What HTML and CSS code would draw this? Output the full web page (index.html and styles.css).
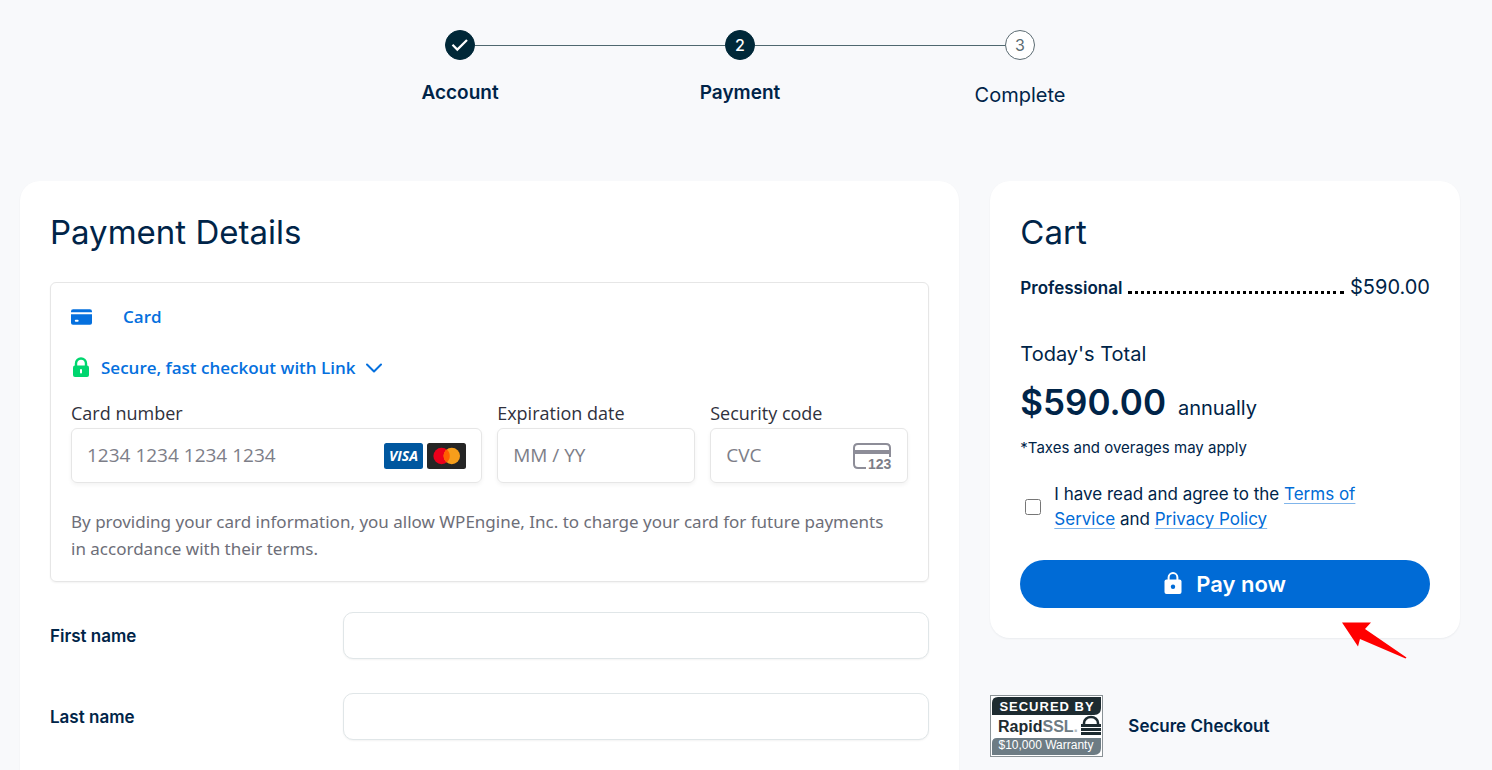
FILE: index.html
```
<!DOCTYPE html>
<html lang="en">
<head>
  <meta charset="UTF-8">
  <meta name="viewport" content="width=device-width, initial-scale=1.0">
  <title>Checkout - Payment</title>
  <link rel="stylesheet" href="styles.css">
</head>
<body>

  <ol class="steps">
    <li class="step done">
      <span class="step-circle">
        <svg width="18" height="14" viewBox="0 0 18 14"><path d="M1.5 6.8 6.3 11.6 16 2" fill="none" stroke="#fff" stroke-width="2.2"/></svg>
      </span>
      <span class="step-label">Account</span>
    </li>
    <li class="step active">
      <span class="step-circle">2</span>
      <span class="step-label">Payment</span>
    </li>
    <li class="step">
      <span class="step-circle">3</span>
      <span class="step-label">Complete</span>
    </li>
  </ol>

  <main class="checkout">

    <form class="panel payment">
      <h1>Payment Details</h1>

      <div class="card-box">
        <div class="card-method">
          <svg width="21" height="16" viewBox="0 0 22 16">
            <path d="M0 3V2.2Q0 0 2.2 0H19.8Q22 0 22 2.2V3Z" fill="#0570de"/>
            <path d="M0 5H22V14Q22 16 20 16H2Q0 16 0 14Z" fill="#0570de"/>
            <rect x="4" y="11" width="4" height="2" rx="1" fill="#fff"/>
          </svg>
          <span>Card</span>
        </div>

        <button type="button" class="link-toggle">
          <svg width="20" height="22" viewBox="0 0 20 22">
            <path d="M5 10V6.5a5 5 0 0 1 10 0V10" fill="none" stroke="#00d66f" stroke-width="2.4"/>
            <rect x="2" y="8.5" width="16" height="11.5" rx="2" fill="#00d66f"/>
            <rect x="9" y="12" width="2" height="4.6" rx="1" fill="#fff"/>
          </svg>
          <span>Secure, fast checkout with Link</span>
          <svg width="16" height="10" viewBox="0 0 16 10"><path d="M1 1.5 8 8.5 15 1.5" fill="none" stroke="#0570de" stroke-width="2" stroke-linecap="round" stroke-linejoin="round"/></svg>
        </button>

        <div class="card-fields">
          <div class="card-number">
            <label for="cardNumber">Card number</label>
            <div class="field">
              <input type="text" id="cardNumber" placeholder="1234 1234 1234 1234">
              <svg width="39" height="26" viewBox="0 0 39 26">
                <rect width="39" height="26" rx="2.5" fill="#00579f"/>
                <text x="19.5" y="18" text-anchor="middle" class="visa">VISA</text>
              </svg>
              <svg width="39" height="26" viewBox="0 0 39 26">
                <rect width="39" height="26" rx="2.5" fill="#252525"/>
                <circle cx="14.6" cy="13" r="8.2" fill="#eb001b"/>
                <circle cx="24.8" cy="13" r="8.2" fill="#f79e1b"/>
                <path d="M19.7 6.6a8.2 8.2 0 0 1 0 12.8a8.2 8.2 0 0 1 0-12.8Z" fill="#ff5f00"/>
              </svg>
            </div>
          </div>
          <div>
            <label for="expiry">Expiration date</label>
            <div class="field">
              <input type="text" id="expiry" placeholder="MM / YY">
            </div>
          </div>
          <div>
            <label for="cvc">Security code</label>
            <div class="field">
              <input type="text" id="cvc" placeholder="CVC">
              <svg width="40" height="32" viewBox="0 -2 40 32">
                <path d="M14 26H6Q2 26 2 22V6Q2 2 6 2H34Q38 2 38 6V15" fill="none" stroke="#8d8d98" stroke-width="2"/>
                <rect x="2" y="8" width="36" height="4" fill="#8d8d98"/>
                <text x="16" y="27" class="cvc-digits">123</text>
              </svg>
            </div>
          </div>
        </div>

        <p class="terms">By providing your card information, you allow WPEngine, Inc. to charge your card for future payments in accordance with their terms.</p>
      </div>

      <div class="form-row">
        <label for="firstName">First name</label>
        <input type="text" id="firstName">
      </div>
      <div class="form-row">
        <label for="lastName">Last name</label>
        <input type="text" id="lastName">
      </div>
    </form>

    <aside>
      <section class="panel cart">
        <h2>Cart</h2>
        <div class="cart-item">
          <span class="item-name">Professional</span>
          <span class="dots"></span>
          <span class="item-price">$590.00</span>
        </div>

        <div class="total-title">Today's Total</div>
        <div class="total"><strong>$590.00</strong> <span>annually</span></div>
        <div class="tax-note">*Taxes and overages may apply</div>

        <div class="agree">
          <input type="checkbox" id="agree">
          <label for="agree">I have read and agree to the <a href="#">Terms of Service</a> and <a href="#">Privacy Policy</a></label>
        </div>

        <button type="button" class="pay-btn">
          <svg width="18" height="24" viewBox="0 0 18 24">
            <path d="M4.6 8V5.5a4.4 4.4 0 0 1 8.8 0V8" fill="none" stroke="#fff" stroke-width="2"/>
            <rect x="0.5" y="7.5" width="17" height="14.5" rx="2" fill="#fff"/>
            <circle cx="9" cy="14.8" r="2.2" fill="#006bd6"/>
          </svg>
          Pay now
        </button>

        <svg class="pointer" width="66" height="38" viewBox="0 0 66 38"><path d="M0 0.5H29L23 7 64.5 35.5 63.5 36.5 18 17 16 24.5Z" fill="#f00"/></svg>
      </section>

      <div class="secure">
        <svg width="113" height="62" viewBox="0 0 113 62">
          <rect x="0.5" y="0.5" width="112" height="61" fill="#fff" stroke="#8a9296"/>
          <path d="M2 20V8Q2 2 8 2H111V13Q111 20 104 20Z" fill="#1d2b30"/>
          <path d="M2 60V48Q2 43 7 43H111V53Q111 60 104 60H2Z" fill="#6d7c84"/>
          <text x="57" y="16" text-anchor="middle" class="seal-top">SECURED BY</text>
          <text x="8" y="37" class="seal-name">Rapid<tspan fill="#6d7c84">SSL</tspan><tspan class="seal-dot">.</tspan></text>
          <text x="56" y="54" text-anchor="middle" class="seal-bottom">$10,000 Warranty</text>
          <path d="M94 30V28a7 6 0 0 1 14 0V30" fill="none" stroke="#1d2b30" stroke-width="2.5"/>
          <path d="M91 30.5H111M91 34.5H111M91 38.5H111" stroke="#1d2b30" stroke-width="3"/>
        </svg>
        <span>Secure Checkout</span>
      </div>
    </aside>

  </main>

</body>
</html>
```
FILE: styles.css
```
* {
  box-sizing: border-box;
}

body {
  font-family: Inter, "Liberation Sans", sans-serif;
  margin: 0;
  padding: 30px 32px 0 20px;
  min-height: 100vh;
  display: flex;
  flex-direction: column;
  background-color: #f8f9fb;
  color: #002448;
}

svg {
  flex: none;
  display: block;
}

/* Progress steps */
.steps {
  width: 840px;
  max-width: 100%;
  margin: 0 auto;
  padding: 0;
  display: flex;
  list-style: none;
}

.step {
  flex: 1;
  position: relative;
  display: flex;
  flex-direction: column;
  align-items: center;
  gap: 20px;
}

.step + .step::before {
  content: "";
  position: absolute;
  top: 15px;
  right: calc(50% + 15px);
  width: calc(100% - 30px);
  height: 1px;
  background-color: #4f686f;
}

.step-circle {
  width: 30px;
  height: 30px;
  border: 1px solid #5b6b72;
  border-radius: 50%;
  display: flex;
  align-items: center;
  justify-content: center;
  background-color: #fff;
  color: #5b6b72;
  font-size: 16px;
}

.done .step-circle,
.active .step-circle {
  background-color: #002838;
  border-color: #002838;
  color: #fff;
  font-weight: 500;
}

.step-label {
  font-size: 20px;
  line-height: 30px;
}

.done .step-label,
.active .step-label {
  font-size: 19px;
  font-weight: 600;
  line-height: 26px;
}

/* Panels */
.checkout {
  flex: 1;
  margin-top: 71px;
  display: grid;
  grid-template-columns: 2fr 1fr;
  gap: 31px;
}

.panel {
  padding: 30px;
  border-radius: 20px;
  background-color: #fff;
  box-shadow: 0 1px 2px rgba(0, 40, 56, 0.06);
}

.payment {
  border-radius: 20px 20px 0 0;
}

h1,
h2 {
  margin: 0 0 28px;
  font-size: 33px;
  line-height: 43px;
  font-weight: 400;
}

/* Card details */
.card-box {
  margin-bottom: 30px;
  padding: 20px 20px 19px;
  border: 1px solid #e6e6e6;
  border-radius: 6px;
  box-shadow: 0 1px 2px rgba(0, 0, 0, 0.05);
  font-family: "Open Sans", "Noto Sans", sans-serif;
  font-size: 18px;
  line-height: 27px;
}

.card-method {
  display: flex;
  align-items: center;
  gap: 31px;
  color: #0570de;
  font-size: 17px;
  font-weight: 600;
}

.link-toggle {
  margin: 24px 0 18px;
  padding: 0;
  border: none;
  background: none;
  display: flex;
  align-items: center;
  gap: 10px;
  font: inherit;
  font-size: 17px;
  font-weight: 600;
  color: #0570de;
  cursor: pointer;
}

.card-fields {
  display: grid;
  grid-template-columns: repeat(4, minmax(0, 1fr));
  gap: 15px;
}

.card-number {
  grid-column: span 2;
}

.card-fields label {
  display: block;
  line-height: 29px;
  color: #30313d;
}

.field {
  height: 55px;
  padding: 0 15px;
  border: 1px solid #e6e6e6;
  border-radius: 6px;
  display: flex;
  align-items: center;
  gap: 4px;
  box-shadow: 0 2px 4px rgba(0, 0, 0, 0.05);
}

.field input {
  flex: 1;
  min-width: 0;
  padding: 0;
  border: none;
  outline: none;
  font: inherit;
  font-size: 19px;
  color: #30313d;
}

.field input::placeholder {
  color: #7d7e88;
}

.visa {
  font: italic 700 14px "Open Sans", sans-serif;
  fill: #fff;
}

.cvc-digits {
  font: 700 14px "Liberation Sans", sans-serif;
  fill: #7d7e88;
}

.terms {
  margin: 25px 0 0;
  padding-right: 10px;
  font-family: "Noto Sans", sans-serif;
  font-size: 17px;
  color: #6d6e78;
}

/* Name fields */
.form-row {
  display: grid;
  grid-template-columns: 1fr 2fr;
  align-items: center;
  margin-bottom: 34px;
}

.form-row:last-child {
  margin-bottom: 0;
}

.form-row label {
  font-size: 17px;
  font-weight: 600;
}

.form-row input {
  height: 47px;
  padding: 0 15px;
  border: 1px solid #e0e6e8;
  border-radius: 10px;
  box-shadow: 0 1px 2px rgba(0, 0, 0, 0.05);
  font: inherit;
}

/* Cart */
.cart {
  position: relative;
}

.cart h2 {
  margin-bottom: 18px;
}

.cart-item {
  display: flex;
  align-items: baseline;
  gap: 6px;
  line-height: 30px;
}

.item-name {
  font-size: 17px;
  font-weight: 600;
}

.dots {
  flex: 1;
  border-bottom: 3px dotted #000;
}

.item-price {
  font-size: 20px;
}

.total-title {
  margin-top: 36px;
  font-size: 20px;
  line-height: 30px;
}

.total {
  margin: 8px 0 9px;
  display: flex;
  align-items: baseline;
  gap: 12px;
  font-size: 20px;
  line-height: 30px;
}

.total strong {
  font-size: 35px;
  line-height: 50px;
  font-weight: 600;
}

.tax-note {
  font-size: 15px;
  line-height: 24px;
}

.agree {
  margin: 22px 0 28px;
  padding-right: 20px;
  display: flex;
  align-items: center;
  gap: 13px;
  font-size: 17px;
  line-height: 25px;
}

.agree input {
  flex: none;
  width: 16px;
  height: 16px;
  margin: 0 0 0 5px;
}

.agree a {
  color: #006bd6;
  text-decoration-color: #80b5eb;
  text-decoration-thickness: 1px;
  text-decoration-skip-ink: none;
  text-underline-offset: 3px;
}

.pay-btn {
  width: 100%;
  height: 48px;
  border: none;
  border-radius: 24px;
  display: flex;
  align-items: center;
  justify-content: center;
  gap: 14px;
  background-color: #006bd6;
  color: #fff;
  font: 600 22px Inter, sans-serif;
  cursor: pointer;
}

.pointer {
  position: absolute;
  right: 52px;
  bottom: -22px;
}

/* Security seal */
.secure {
  margin-top: 57px;
  display: flex;
  align-items: center;
  gap: 25px;
  font-size: 17px;
  font-weight: 600;
}

.seal-top {
  font: 700 13px "Liberation Sans", sans-serif;
  letter-spacing: 1px;
  fill: #fff;
}

.seal-name {
  font: 700 16px "Liberation Sans", sans-serif;
  fill: #1d2b30;
}

.seal-dot {
  fill: #b5bdc1;
}

.seal-bottom {
  font: 12px "Liberation Sans", sans-serif;
  fill: #fff;
}
```
